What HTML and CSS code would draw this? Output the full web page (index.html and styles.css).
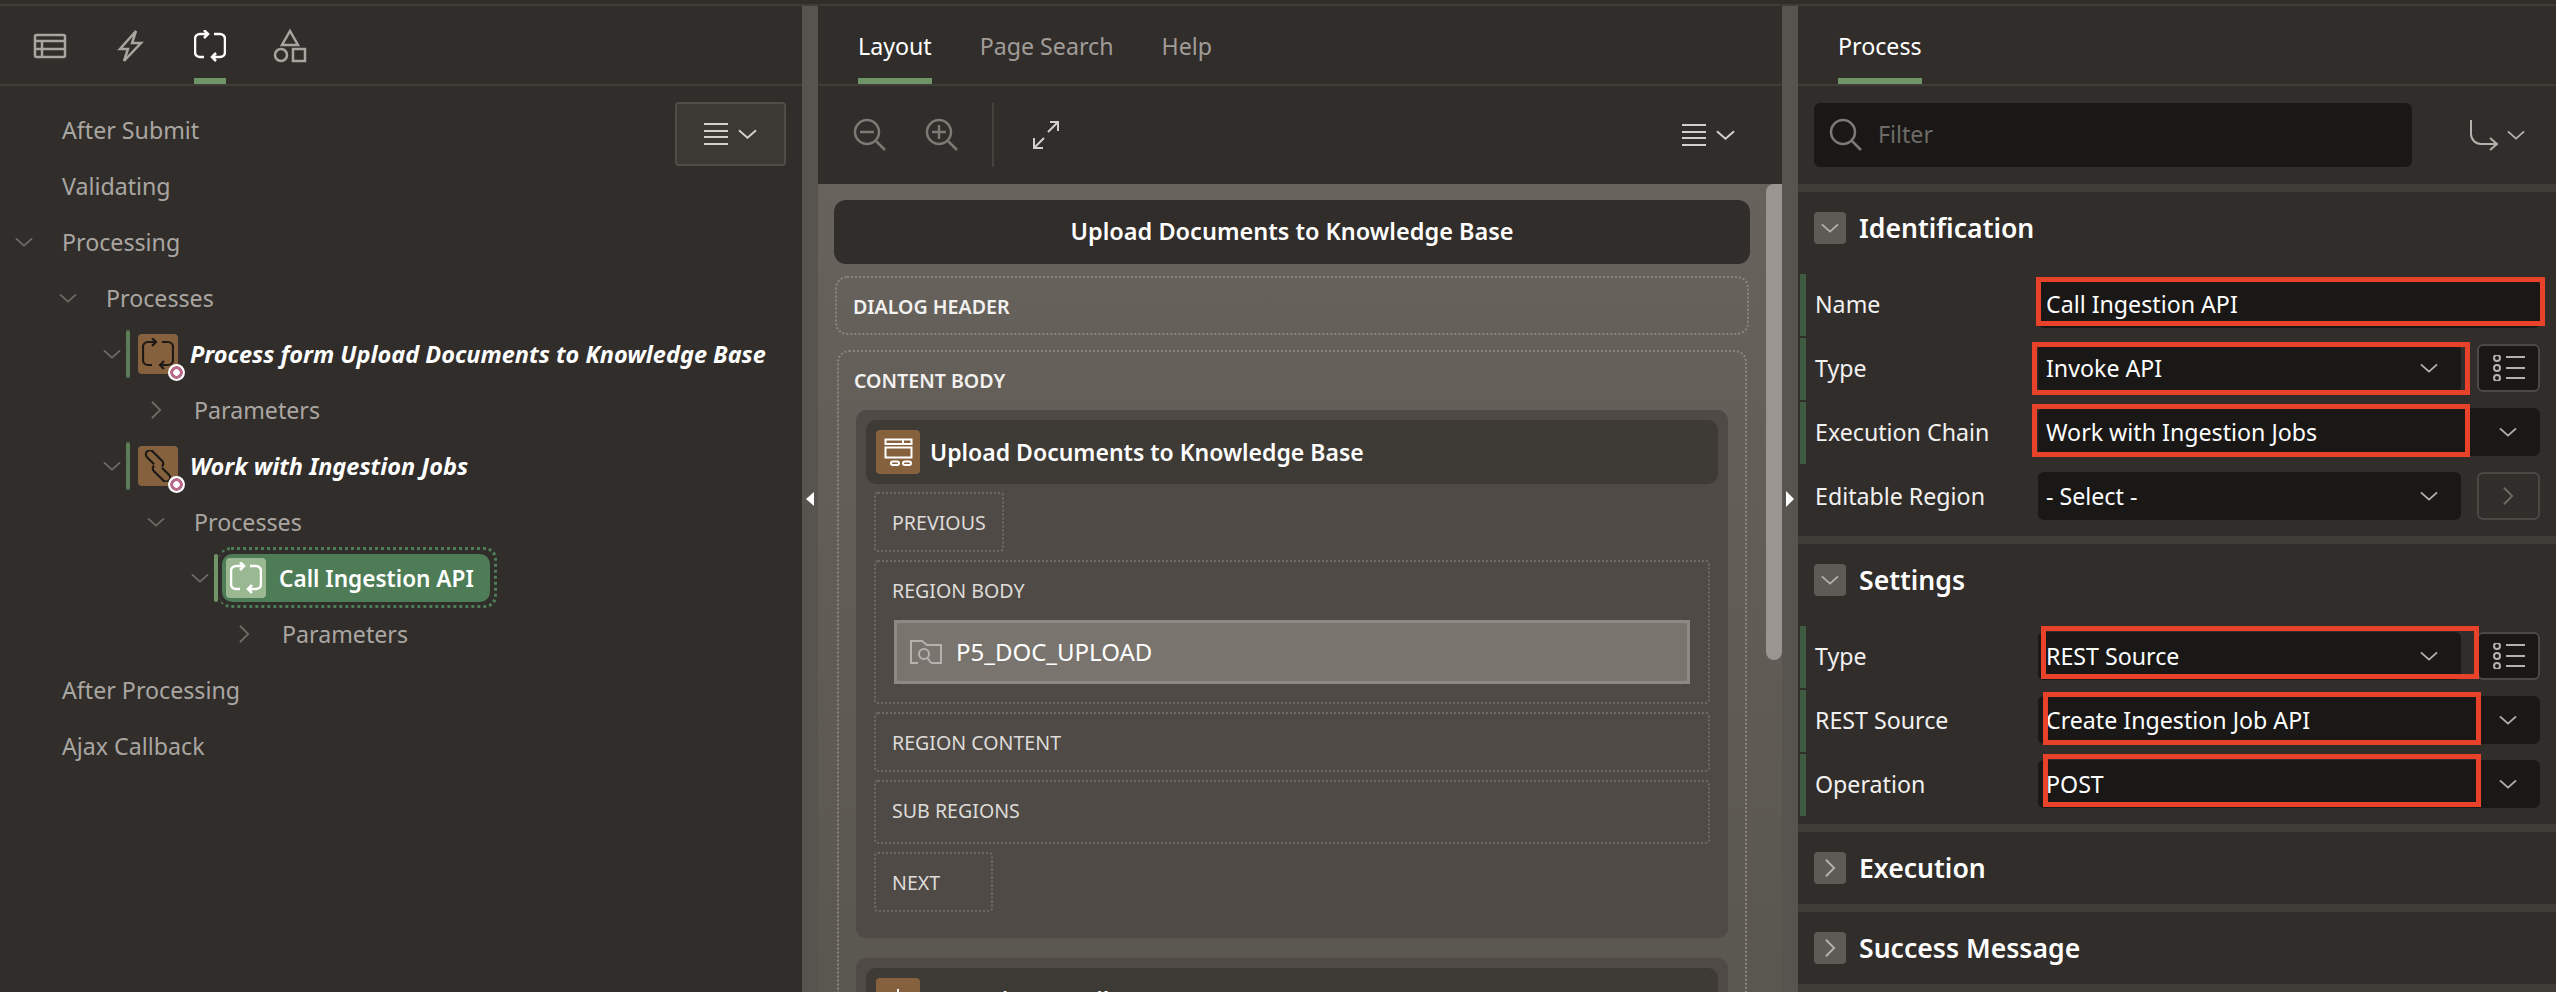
FILE: index.html
```html
<!DOCTYPE html>
<html>
<head>
	<title>Page Designer</title>
	<link rel="stylesheet" href="styles.css">
</head>
<body>
<svg class="defs" width="0" height="0">
	<symbol id="i-loop" viewBox="0 0 32 32"><path d="M14 4H6a5 5 0 0 0-5 5v13a5 5 0 0 0 5 5h4M10 0l4 4-4 4M18 27h8a5 5 0 0 0 5-5V9a5 5 0 0 0-5-5h-6M22 23l-4 4 4 4"/></symbol>
	<symbol id="i-link" viewBox="0 0 32 32"><g transform="translate(16 16) rotate(45)"><path d="M3-2.500V-3a3.500 3.500 0 0 0-3.500-3.500H-14a4 4 0 0 0 0 8H-4"/><path d="M-3 2.500V3a3.500 3.500 0 0 0 3.500 3.500H14a4 4 0 0 0 0-8H4"/></g></symbol>
	<symbol id="i-down" viewBox="0 0 20 10"><path d="M1 1l9 8 9-8"/></symbol>
	<symbol id="i-right" viewBox="0 0 12 20"><path d="M1 1l9 9-9 9"/></symbol>
	<symbol id="i-menu" viewBox="0 0 24 22"><path d="M0 1h24M0 8h24M0 14h24M0 21h24"/></symbol>
	<symbol id="i-list" viewBox="0 0 32 26"><circle cx="4" cy="3" r="3"/><circle cx="4" cy="13" r="3"/><circle cx="4" cy="23" r="3"/><path d="M13 2h19M13 13h19M13 23h19"/></symbol>
</svg>

<div class="app">
	<div class="top-line"></div>
	<div class="panes">

		<div class="pane left-pane">
			<div class="tabs icon-tabs">
				<div class="tab-icon">
					<svg class="ico" width="32" height="24" viewBox="0 0 32 24"><rect x="1" y="1" width="30" height="22" rx="1.5"/><path d="M1 7h30M1 15h30M8 7v16"/></svg>
				</div>
				<div class="tab-icon">
					<svg class="ico" width="24" height="32" viewBox="0 0 24 32"><path d="M18 1 2 19h8l-4 12 17-18h-9z"/></svg>
				</div>
				<div class="tab-icon active">
					<svg class="ico" width="32" height="32"><use href="#i-loop"/></svg>
				</div>
				<div class="tab-icon">
					<svg class="ico" width="32" height="32" viewBox="0 0 32 32"><path d="M16 1l8 14H8z"/><circle cx="7" cy="25" r="6"/><rect x="19" y="19" width="12" height="12"/></svg>
				</div>
			</div>
			<div class="tree">
				<button class="menu-button">
					<svg class="ico light" width="24" height="22"><use href="#i-menu"/></svg>
					<svg class="ico light" width="19" height="10"><use href="#i-down"/></svg>
				</button>
				<div class="row lvl-1"><span class="twisty"></span>After Submit</div>
				<div class="row lvl-1"><span class="twisty"></span>Validating</div>
				<div class="row lvl-1"><span class="twisty"><svg class="ico dim" width="18" height="10"><use href="#i-down"/></svg></span>Processing</div>
				<div class="row lvl-2"><span class="twisty"><svg class="ico dim" width="18" height="10"><use href="#i-down"/></svg></span>Processes</div>
				<div class="row lvl-3">
					<svg class="ico dim" width="18" height="10"><use href="#i-down"/></svg>
					<span class="node-bar"></span>
					<span class="node-icon"><svg class="ico black" width="32" height="32"><use href="#i-loop"/></svg><span class="badge"></span></span>
					<span class="node-text">Process form Upload Documents to Knowledge Base</span>
				</div>
				<div class="row lvl-4"><span class="twisty narrow"><svg class="ico dim" width="11" height="20"><use href="#i-right"/></svg></span>Parameters</div>
				<div class="row lvl-3">
					<svg class="ico dim" width="18" height="10"><use href="#i-down"/></svg>
					<span class="node-bar"></span>
					<span class="node-icon"><svg class="ico black" width="32" height="32"><use href="#i-link"/></svg><span class="badge"></span></span>
					<span class="node-text">Work with Ingestion Jobs</span>
				</div>
				<div class="row lvl-4b"><span class="twisty"><svg class="ico dim" width="18" height="10"><use href="#i-down"/></svg></span>Processes</div>
				<div class="row lvl-5">
					<svg class="ico dim" width="18" height="10"><use href="#i-down"/></svg>
					<span class="node-bar selected-bar"></span>
					<span class="selected-node">
						<span class="node-icon light-icon"><svg class="ico white" width="32" height="32"><use href="#i-loop"/></svg></span>
						<span class="selected-text">Call Ingestion API</span>
					</span>
				</div>
				<div class="row lvl-6"><span class="twisty narrow"><svg class="ico dim" width="11" height="20"><use href="#i-right"/></svg></span>Parameters</div>
				<div class="row lvl-1"><span class="twisty"></span>After Processing</div>
				<div class="row lvl-1"><span class="twisty"></span>Ajax Callback</div>
			</div>
		</div>

		<div class="gutter"><span class="arrow-left"></span></div>

		<div class="pane center-pane">
			<div class="tabs text-tabs">
				<div class="tab active">Layout</div>
				<div class="tab">Page Search</div>
				<div class="tab">Help</div>
			</div>
			<div class="toolbar">
				<svg class="ico grey" width="32" height="32" viewBox="0 0 32 32"><circle cx="13" cy="13" r="12"/><path d="M21.500 21.500 31 31M6 13h14"/></svg>
				<svg class="ico grey zoom-in" width="32" height="32" viewBox="0 0 32 32"><circle cx="13" cy="13" r="12"/><path d="M21.500 21.500 31 31M6 13h14M13 6v14"/></svg>
				<span class="tool-sep"></span>
				<svg class="ico light" width="26" height="28" viewBox="0 0 26 28"><path d="M1 27 11 17M1 17v10h9M15 11 25 1M17 1h8v9"/></svg>
				<span class="tool-right">
					<svg class="ico light" width="24" height="22"><use href="#i-menu"/></svg>
					<svg class="ico light" width="19" height="10"><use href="#i-down"/></svg>
				</span>
			</div>
			<div class="canvas-wrap">
				<div class="canvas">
					<div class="page-title">Upload Documents to Knowledge Base</div>
					<div class="slot dialog-header">DIALOG HEADER</div>
					<div class="slot content-body">
						<div class="content-label">CONTENT BODY</div>
						<div class="region">
							<div class="region-head">
								<span class="region-icon">
									<svg class="ico white thin" width="44" height="44" viewBox="0 0 44 44"><rect x="9.500" y="9.500" width="26" height="4.500"/><path d="M27 9.500v4.500"/><rect x="9.500" y="17.500" width="26" height="10"/><rect x="15" y="31.500" width="8" height="3.500" rx="1.700"/><rect x="27" y="31.500" width="8" height="3.500" rx="1.700"/></svg>
								</span>
								Upload Documents to Knowledge Base
							</div>
							<div class="slots">
								<div class="slot inner short prev">PREVIOUS</div>
								<div class="slot inner region-body">
									<div class="body-label">REGION BODY</div>
									<div class="page-item">
										<svg class="ico soft" width="32" height="24" viewBox="0 0 32 24"><path d="M8 23H1V1h11l5 4h14v18H21"/><circle cx="14" cy="14" r="5"/><path d="M17.500 18 21 23"/></svg>
										P5_DOC_UPLOAD
									</div>
								</div>
								<div class="slot inner">REGION CONTENT</div>
								<div class="slot inner tall">SUB REGIONS</div>
								<div class="slot inner short next">NEXT</div>
							</div>
						</div>
						<div class="region second">
							<div class="region-head">
								<span class="region-icon">
									<svg class="ico white thin" width="44" height="44" viewBox="0 0 44 44"><path d="M22 11v24"/></svg>
								</span>
								Ingestion Details
							</div>
						</div>
					</div>
				</div>
				<div class="scrollbar"><div class="thumb"></div></div>
			</div>
		</div>

		<div class="gutter"><span class="arrow-right"></span></div>

		<div class="pane right-pane">
			<div class="tabs text-tabs process-tabs">
				<div class="tab active">Process</div>
			</div>
			<div class="filter-bar">
				<div class="filter">
					<svg class="ico grey" width="32" height="32" viewBox="0 0 32 32"><circle cx="13" cy="13" r="12"/><path d="M21.500 21.500 31 31"/></svg>
					<span class="filter-text">Filter</span>
				</div>
				<svg class="ico soft goto" width="28" height="30" viewBox="0 0 28 30"><path d="M1 0v14a10 10 0 0 0 10 10h16M20 18l7 6-7 6"/></svg>
				<svg class="ico soft" width="18" height="10"><use href="#i-down"/></svg>
			</div>

			<div class="section">
				<div class="section-head"><span class="toggle"><svg class="ico soft" width="18" height="10"><use href="#i-down"/></svg></span>Identification</div>
				<div class="props">
					<div class="prop">
						<label>Name</label>
						<div class="field"><div class="input">Call Ingestion API</div><span class="mark mark-name"></span></div>
					</div>
					<div class="prop">
						<label>Type</label>
						<div class="field">
							<div class="select">Invoke API<svg class="ico soft" width="18" height="10"><use href="#i-down"/></svg></div>
							<span class="aux"><svg class="ico soft" width="32" height="26"><use href="#i-list"/></svg></span>
							<span class="mark mark-type"></span>
						</div>
					</div>
					<div class="prop">
						<label>Execution Chain</label>
						<div class="field">
							<div class="select">Work with Ingestion Jobs<svg class="ico soft" width="18" height="10"><use href="#i-down"/></svg></div>
							<span class="mark mark-chain"></span>
						</div>
					</div>
					<div class="prop plain">
						<label>Editable Region</label>
						<div class="field">
							<div class="select">- Select -<svg class="ico soft" width="18" height="10"><use href="#i-down"/></svg></div>
							<span class="aux off"><svg class="ico dim" width="11" height="20"><use href="#i-right"/></svg></span>
						</div>
					</div>
				</div>
			</div>

			<div class="section">
				<div class="section-head"><span class="toggle"><svg class="ico soft" width="18" height="10"><use href="#i-down"/></svg></span>Settings</div>
				<div class="props">
					<div class="prop">
						<label>Type</label>
						<div class="field">
							<div class="select">REST Source<svg class="ico soft" width="18" height="10"><use href="#i-down"/></svg></div>
							<span class="aux"><svg class="ico soft" width="32" height="26"><use href="#i-list"/></svg></span>
							<span class="mark mark-stype"></span>
						</div>
					</div>
					<div class="prop">
						<label>REST Source</label>
						<div class="field">
							<div class="select">Create Ingestion Job API<svg class="ico soft" width="18" height="10"><use href="#i-down"/></svg></div>
							<span class="mark mark-rest"></span>
						</div>
					</div>
					<div class="prop">
						<label>Operation</label>
						<div class="field">
							<div class="select">POST<svg class="ico soft" width="18" height="10"><use href="#i-down"/></svg></div>
							<span class="mark mark-post"></span>
						</div>
					</div>
				</div>
			</div>

			<div class="section closed">
				<div class="section-head"><span class="toggle"><svg class="ico soft" width="11" height="20"><use href="#i-right"/></svg></span>Execution</div>
			</div>
			<div class="section closed">
				<div class="section-head"><span class="toggle"><svg class="ico soft" width="11" height="20"><use href="#i-right"/></svg></span>Success Message</div>
			</div>
			<div class="section closed"></div>
		</div>

	</div>
</div>
</body>
</html>
```

FILE: styles.css
```css
* {
	box-sizing: border-box;
}

html, body {
	margin: 0;
	padding: 0;
	background-color: #312d2a;
}

body {
	font-family: "Noto Sans", "Open Sans", sans-serif;
	font-size: 23.2px;
	color: #fff;
}

.defs {
	position: absolute;
}

.app {
	display: flex;
	flex-direction: column;
	width: 2556px;
	height: 992px;
	overflow: hidden;
}

.top-line {
	height: 6px;
	flex: none;
	border-bottom: 2px solid #403c38;
}

.panes {
	display: flex;
	flex: 1;
	min-height: 0;
}

.pane {
	display: flex;
	flex-direction: column;
	min-height: 0;
	overflow: hidden;
}

.left-pane {
	width: 802px;
}

.center-pane {
	width: 964px;
}

.right-pane {
	width: 758px;
}

.gutter {
	display: flex;
	align-items: center;
	justify-content: center;
	flex: none;
	width: 16px;
	padding-top: 326px;
	padding-bottom: 326px;
	background-color: #57534e;
}

.arrow-left {
	border-top: 7px solid transparent;
	border-bottom: 7px solid transparent;
	border-right: 8px solid #fff;
}

.arrow-right {
	border-top: 8px solid transparent;
	border-bottom: 8px solid transparent;
	border-left: 8px solid #fff;
}

/* svg icons */

.ico {
	display: block;
	flex: none;
	fill: none;
	stroke: #a8a5a1;
	stroke-width: 2.500;
	overflow: visible;
}

.ico.dim {
	stroke: #6d6965;
	stroke-width: 2;
}

.ico.grey {
	stroke: #7d7974;
}

.ico.soft {
	stroke: #b5b2ae;
	stroke-width: 2;
}

.ico.light {
	stroke: #d2cfcc;
	stroke-width: 2;
}

.ico.black {
	stroke: #1c1917;
	stroke-width: 2.200;
}

.ico.white {
	stroke: #fff;
}

.ico.thin {
	stroke-width: 2;
}

/* tabs */

.tabs {
	display: flex;
	flex: none;
	height: 80px;
	border-bottom: 2px solid #403c38;
}

.icon-tabs {
	padding-left: 34px;
	gap: 48px;
}

.tab-icon {
	display: flex;
	justify-content: center;
	align-items: center;
	height: 78px;
	padding-top: 8px;
	border-bottom: 6px solid transparent;
}

.tab-icon:nth-child(2) {
	width: 32px;
	margin-right: 0;
}

.tab-icon.active {
	border-bottom-color: #6f9467;
}

.tab-icon.active .ico {
	stroke: #fff;
}

.text-tabs {
	padding-left: 40px;
	gap: 48px;
}

.process-tabs {
	padding-left: 40px;
}

.tab {
	height: 78px;
	line-height: 80px;
	color: #a09c98;
	white-space: nowrap;
}

.tab.active {
	color: #fff;
	border-bottom: 6px solid #6f9467;
}

/* tree */

.tree {
	position: relative;
	padding-top: 16px;
	color: #a9a6a2;
}

.menu-button {
	position: absolute;
	top: 16px;
	left: 675px;
	display: flex;
	align-items: center;
	justify-content: center;
	gap: 10px;
	width: 111px;
	height: 64px;
	padding: 0;
	background-color: #3c3935;
	border: 2px solid #504c47;
	border-radius: 4px;
}

.row {
	display: flex;
	align-items: center;
	height: 56px;
	white-space: nowrap;
}

.lvl-1 { padding-left: 15px; }
.lvl-2 { padding-left: 59px; }
.lvl-3 { padding-left: 103px; }
.lvl-4 { padding-left: 151px; }
.lvl-4b { padding-left: 147px; }
.lvl-5 { padding-left: 191px; }
.lvl-6 { padding-left: 239px; }

.twisty {
	flex: none;
	width: 47px;
}

.twisty.narrow {
	width: 43px;
}

.node-bar {
	flex: none;
	width: 4px;
	height: 48px;
	margin-left: 5px;
	margin-right: 8px;
	background-color: #5a7c56;
	border-radius: 2px;
}

.selected-bar {
	margin-right: 4px;
	background-color: #6f9467;
}

.node-icon {
	position: relative;
	display: flex;
	align-items: center;
	justify-content: center;
	flex: none;
	width: 40px;
	height: 40px;
	background-color: #86613d;
	border-radius: 4px;
}

.badge {
	position: absolute;
	right: -7px;
	bottom: -7px;
	width: 17px;
	height: 17px;
	border-radius: 50%;
	background: radial-gradient(circle, #fff 0 3px, #b8698a 3.500px 6px, #fff 6.500px);
}

.node-text {
	margin-left: 12px;
	font-size: 23.500px;
	font-weight: 700;
	font-style: italic;
	color: #fff;
}

.selected-node {
	position: relative;
	display: flex;
	align-items: center;
	width: 268px;
	height: 48px;
	padding-left: 4px;
	background-color: #4d7c56;
	border-radius: 10px;
}

.selected-node::after {
	content: "";
	position: absolute;
	top: -7px;
	left: -3px;
	right: -7px;
	bottom: -6px;
	border: 3px dotted #4d7c56;
	border-left: 0;
	border-radius: 12px;
}

.light-icon {
	background-color: #9ab892;
}

.selected-text {
	margin-left: 13px;
	font-size: 22.600px;
	font-weight: 600;
	color: #fff;
}

/* center */

.toolbar {
	display: flex;
	align-items: center;
	flex: none;
	height: 98px;
	padding-left: 36px;
}

.zoom-in {
	margin-left: 40px;
}

.tool-sep {
	width: 2px;
	height: 64px;
	margin-left: 34px;
	margin-right: 39px;
	background-color: #45413d;
}

.tool-right {
	display: flex;
	align-items: center;
	gap: 10px;
	margin-left: auto;
	margin-right: 47px;
}

.canvas-wrap {
	display: flex;
	flex: 1;
	min-height: 0;
	background: linear-gradient(#67625c, #5a5650);
}

.canvas {
	flex: 1;
	min-width: 0;
	padding: 16px 16px 0;
}

.scrollbar {
	flex: none;
	width: 16px;
}

.thumb {
	height: 476px;
	background-color: #9a9590;
	border-radius: 8px 0 8px 8px;
}

.page-title {
	height: 64px;
	margin-bottom: 12px;
	line-height: 62px;
	text-align: center;
	font-size: 23.500px;
	font-weight: 600;
	background-color: #312d2a;
	border-radius: 12px;
}

.slot {
	font-size: 19.600px;
	border: 2px dotted #8a857f;
	border-radius: 4px;
}

.dialog-header {
	height: 59px;
	margin: 0 1px 15px;
	padding-left: 16px;
	line-height: 58px;
	font-weight: 600;
	color: #f2f1f0;
	border-radius: 12px;
}

.content-body {
	margin: 0 3px;
	height: 700px;
	padding: 0 17px;
	border-radius: 12px;
}

.content-label {
	height: 58px;
	margin-left: -2px;
	line-height: 58px;
	font-weight: 600;
	color: #f2f1f0;
}

.region {
	height: 528px;
	margin-bottom: 20px;
	padding: 10px;
	background-color: #4f4a45;
	border-radius: 10px;
}

.region.second {
	height: 200px;
	margin-bottom: 0;
}

.region-head {
	display: flex;
	align-items: center;
	height: 64px;
	padding-left: 10px;
	font-size: 23px;
	font-weight: 600;
	background-color: #3e3a35;
	border-radius: 10px;
}

.region-icon {
	flex: none;
	width: 44px;
	height: 44px;
	margin-right: 10px;
	background-color: #86613d;
	border-radius: 4px;
}

.slots {
	display: flex;
	flex-direction: column;
	align-items: flex-start;
	gap: 8px;
	margin: 8px 8px 0;
}

.inner {
	width: 100%;
	height: 60px;
	padding-left: 16px;
	line-height: 58px;
	color: #dedcda;
	border-color: #6f6a65;
}

.inner.tall {
	height: 64px;
}

.inner.short {
	height: 60px;
}

.prev {
	width: 130px;
}

.next {
	width: 119px;
}

.region-body {
	height: 144px;
}

.body-label {
	height: 58px;
}

.page-item {
	display: flex;
	align-items: center;
	gap: 14px;
	width: 796px;
	height: 64px;
	margin-left: 2px;
	padding-left: 13px;
	font-size: 24px;
	color: #fff;
	background-color: #79746e;
	border: 3px solid #8d8985;
}

/* property editor */

.filter-bar {
	display: flex;
	align-items: center;
	flex: none;
	height: 98px;
	padding-left: 16px;
}

.filter {
	display: flex;
	align-items: center;
	width: 598px;
	height: 64px;
	padding-left: 16px;
	color: #6e6a66;
	background-color: #1a1816;
	border-radius: 6px;
}

.filter-text {
	margin-left: 16px;
	margin-bottom: 2px;
}

.goto {
	margin-left: 58px;
	margin-right: 9px;
}

.section {
	border-top: 8px solid #3f3b36;
	padding-bottom: 6px;
}

.section.closed {
	padding-bottom: 20px;
}

.section-head {
	display: flex;
	align-items: center;
	height: 32px;
	margin-top: 20px;
	padding-left: 16px;
	font-size: 26.600px;
	font-weight: 600;
}

.toggle {
	display: flex;
	align-items: center;
	justify-content: center;
	flex: none;
	width: 32px;
	height: 32px;
	margin-right: 13px;
	background-color: #5e5a55;
	border-radius: 4px;
}

.props {
	margin-top: 30px;
	margin-left: 2px;
}

.prop {
	display: flex;
	height: 62px;
	margin-bottom: 2px;
	padding-top: 6px;
	border-left: 6px solid #3d5c42;
}

.prop.plain {
	border-left-color: transparent;
}

.prop label {
	flex: none;
	width: 232px;
	padding-left: 9px;
	line-height: 48px;
	color: #f2f1f0;
	white-space: nowrap;
}

.field {
	position: relative;
	display: flex;
	justify-content: space-between;
	width: 502px;
	height: 48px;
}

.input, .select {
	display: flex;
	align-items: center;
	flex: 1;
	padding-left: 8px;
	padding-right: 23px;
	color: #fff;
	background-color: #1a1816;
	border-radius: 6px;
}

.select {
	justify-content: space-between;
}

.aux {
	display: flex;
	align-items: center;
	justify-content: center;
	flex: none;
	width: 63px;
	margin-left: 16px;
	background-color: #1a1816;
	border: 2px solid #4b4743;
	border-radius: 6px;
}

.aux.off {
	background-color: transparent;
}

/* red annotation boxes drawn over the fields */

.mark {
	position: absolute;
	width: 438px;
	height: 53px;
	border: 5px solid #e8432a;
}

.mark-name {
	top: -3px;
	left: -2px;
	width: 509px;
	height: 49px;
}

.mark-type {
	top: -2px;
	left: -6px;
}

.mark-chain {
	top: -4px;
	left: -6px;
}

.mark-stype {
	top: -6px;
	left: 3px;
}

.mark-rest {
	top: -4px;
	left: 5px;
}

.mark-post {
	top: -6px;
	left: 5px;
}
```
